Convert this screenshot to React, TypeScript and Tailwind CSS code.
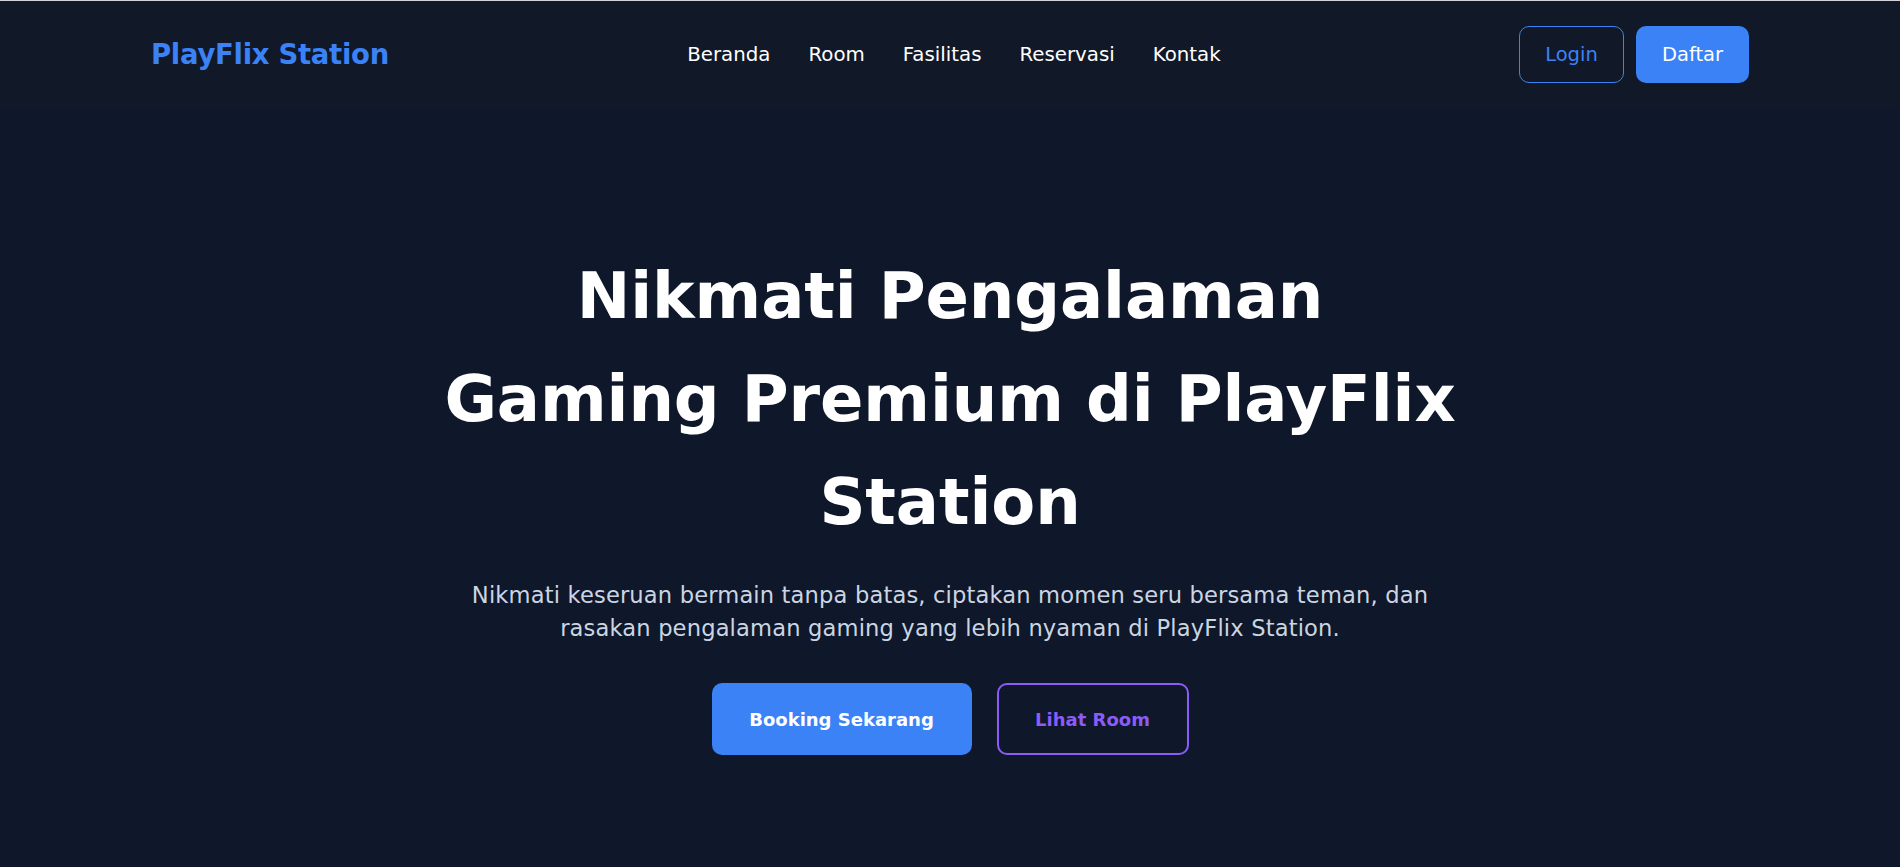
import React from "react";

const font = { fontFamily: '"DejaVu Sans", "Noto Sans", sans-serif' };

export default function App() {
  const links = ["Beranda", "Room", "Fasilitas", "Reservasi", "Kontak"];
  return (
    <div
      className="min-h-[867px] w-full bg-[#0f172a] border-t border-[#d4d4d8] flex flex-col"
      style={font}
    >
      <header className="bg-[#111827] h-[107px] px-[151px] flex items-center justify-between">
        <a className="text-[27.5px] leading-none font-bold text-[#3b82f6] tracking-[-0.3px]">
          PlayFlix Station
        </a>
        <nav className="flex items-center gap-[38px]">
          {links.map((l) => (
            <a key={l} className="text-[19.8px] text-white leading-none">
              {l}
            </a>
          ))}
        </nav>
        <div className="flex items-center gap-[12px]">
          <button className="w-[105px] h-[57px] rounded-[10px] border border-[#3b82f6] text-[#3b82f6] text-[19.5px] flex items-center justify-center">
            Login
          </button>
          <button className="w-[113px] h-[57px] rounded-[10px] bg-[#3b82f6] text-white text-[19.5px] flex items-center justify-center">
            Daftar
          </button>
        </div>
      </header>
      <main className="flex-1 flex flex-col items-center pt-[137px]">
        <h1 className="text-center text-white font-bold text-[64px] leading-[103px] tracking-[-0.1px]">
          Nikmati Pengalaman
          <br />
          Gaming Premium di PlayFlix
          <br />
          Station
        </h1>
        <p className="mt-[25px] text-center text-[#cbd5e1] text-[22.6px] leading-[33px] tracking-[0.15px]">
          Nikmati keseruan bermain tanpa batas, ciptakan momen seru bersama teman, dan
          <br />
          rasakan pengalaman gaming yang lebih nyaman di PlayFlix Station.
        </p>
        <div className="mt-[38px] flex items-center gap-[25px]">
          <button className="w-[260px] h-[72px] rounded-[10px] bg-[#3b82f6] text-white font-bold text-[18px] flex items-center justify-center">
            Booking Sekarang
          </button>
          <button className="w-[192px] h-[72px] rounded-[10px] border-2 border-[#8b5cf6] text-[#8b5cf6] font-bold text-[18px] flex items-center justify-center">
            Lihat Room
          </button>
        </div>
      </main>
    </div>
  );
}
